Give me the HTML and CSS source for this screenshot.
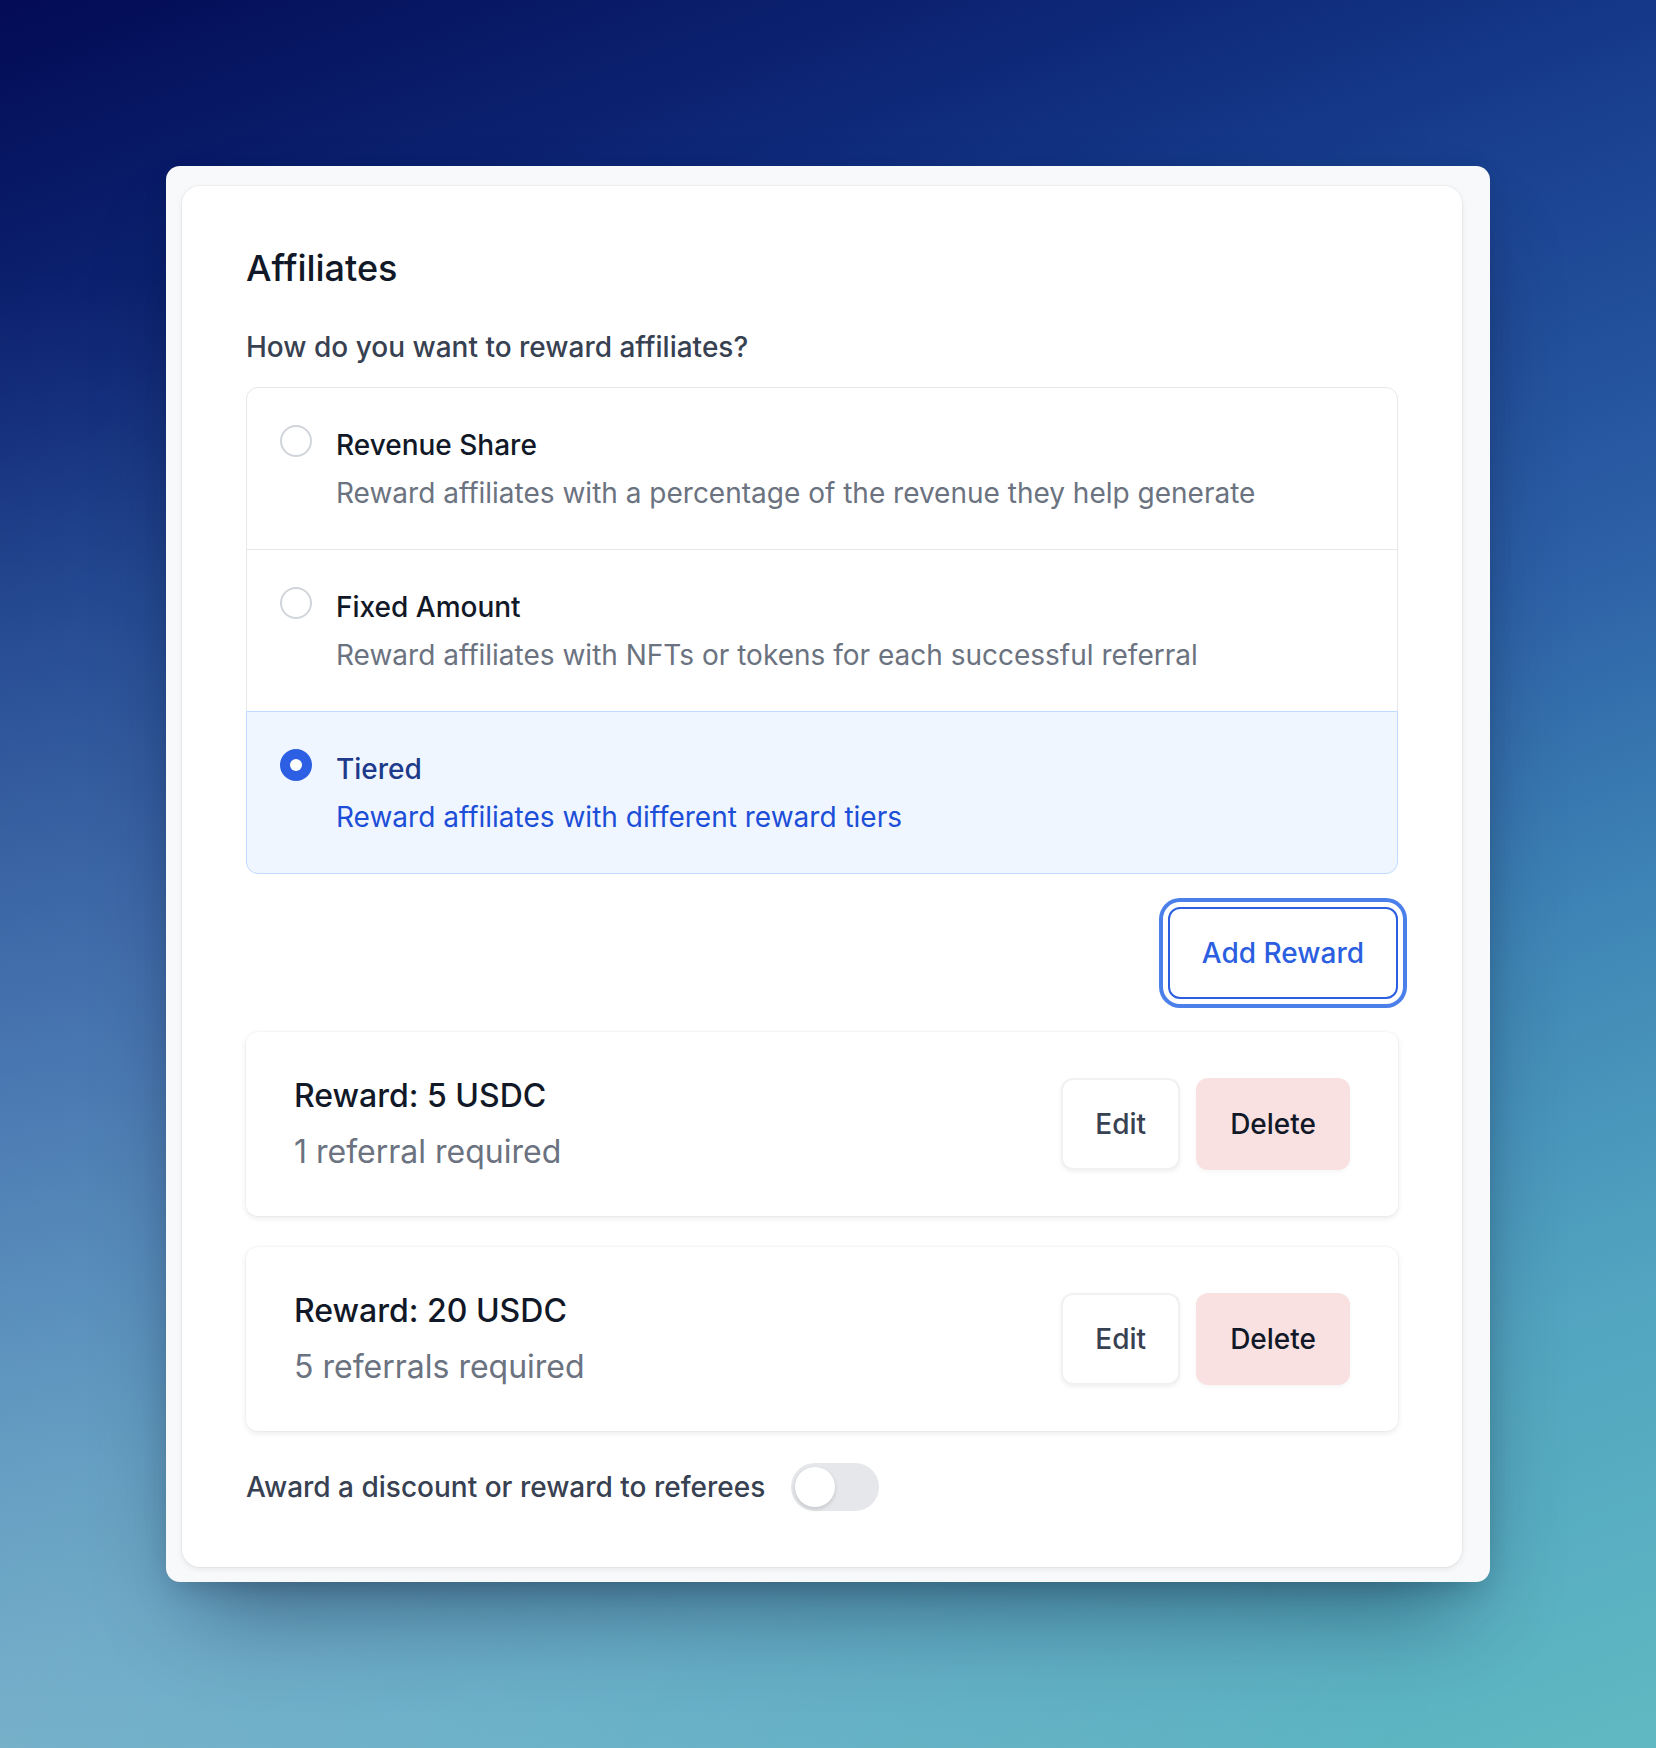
FILE: index.html
```html
<!DOCTYPE html>
<html lang="en">
<head>
<meta charset="utf-8">
<title>Affiliates</title>
<link rel="stylesheet" href="styles.css">
</head>
<body>
<div class="page">
  <div class="frame">
    <div class="panel">
      <h2 class="title">Affiliates</h2>
      <p class="question">How do you want to reward affiliates?</p>
      <div class="options">
        <div class="option">
          <span class="radio"></span>
          <div class="option-text">
            <div class="option-label">Revenue Share</div>
            <div class="option-desc">Reward affiliates with a percentage of the revenue they help generate</div>
          </div>
        </div>
        <div class="option">
          <span class="radio"></span>
          <div class="option-text">
            <div class="option-label">Fixed Amount</div>
            <div class="option-desc">Reward affiliates with NFTs or tokens for each successful referral</div>
          </div>
        </div>
        <div class="option option-selected">
          <span class="radio radio-checked"></span>
          <div class="option-text">
            <div class="option-label">Tiered</div>
            <div class="option-desc">Reward affiliates with different reward tiers</div>
          </div>
        </div>
      </div>
      <div class="actions">
        <button class="btn-add" type="button">Add Reward</button>
      </div>
      <div class="rewards">
        <div class="reward-card">
          <div class="reward-info">
            <div class="reward-title">Reward: 5 USDC</div>
            <div class="reward-sub">1 referral required</div>
          </div>
          <div class="reward-buttons">
            <button class="btn btn-edit" type="button">Edit</button>
            <button class="btn btn-delete" type="button">Delete</button>
          </div>
        </div>
        <div class="reward-card">
          <div class="reward-info">
            <div class="reward-title">Reward: 20 USDC</div>
            <div class="reward-sub">5 referrals required</div>
          </div>
          <div class="reward-buttons">
            <button class="btn btn-edit" type="button">Edit</button>
            <button class="btn btn-delete" type="button">Delete</button>
          </div>
        </div>
      </div>
      <div class="toggle-row">
        <span class="toggle-label">Award a discount or reward to referees</span>
        <span class="toggle"><span class="knob"></span></span>
      </div>
    </div>
  </div>
</div>
</body>
</html>
```

FILE: styles.css
```css
* { box-sizing: border-box; }

html, body {
  margin: 0;
  padding: 0;
}

body {
  font-family: "Inter", "Noto Sans", "Liberation Sans", sans-serif;
  width: 1656px;
  height: 1748px;
  overflow: hidden;
}

.page {
  width: 1656px;
  height: 1748px;
  display: flex;
  align-items: center;
  justify-content: center;
  background:
    radial-gradient(ellipse at 0% 100%, rgba(170, 205, 218, 0.45) 0%, rgba(170, 205, 218, 0) 60%),
    linear-gradient(160deg, #030b55 0%, #0e2878 18%, #173d8c 28%, #2c5fa6 48%, #3f86b6 64%, #52a4c0 80%, #60b9c2 100%);
}

.frame {
  width: 1324px;
  height: 1416px;
  background: #f8f9fb;
  border-radius: 14px;
  padding: 20px 28px 15px 16px;
  box-shadow: 0 50px 90px -30px rgba(0, 10, 40, 0.45), 0 10px 30px -10px rgba(0, 10, 40, 0.25);
}

.panel {
  background: #ffffff;
  border-radius: 18px;
  height: 100%;
  padding: 58px 64px 56px 64px;
  box-shadow: 0 2px 6px rgba(0, 0, 0, 0.08), 0 0 0 1px rgba(0, 0, 0, 0.03);
  display: flex;
  flex-direction: column;
}

.title {
  margin: 0;
  font-size: 36px;
  line-height: 48px;
  font-weight: 500;
  color: #111827;
}

.question {
  margin: 35px 0 0 0;
  font-size: 28px;
  line-height: 40px;
  font-weight: 500;
  color: #374151;
}

.options {
  margin-top: 20px;
  display: flex;
  flex-direction: column;
}

.option {
  display: flex;
  align-items: flex-start;
  gap: 24px;
  padding: 37px 32px 36px 33px;
  border: 1px solid #e5e7eb;
  background: #ffffff;
}

.option + .option {
  margin-top: -1px;
}

.option:first-child {
  border-radius: 12px 12px 0 0;
}

.option:last-child {
  border-radius: 0 0 12px 12px;
}

.option-selected {
  position: relative;
  z-index: 1;
  background: #eff6ff;
  border-color: #bfdbfe;
}

.radio {
  flex: none;
  width: 32px;
  height: 32px;
  border-radius: 50%;
  border: 2px solid #d1d5db;
  background: #ffffff;
  display: flex;
  align-items: center;
  justify-content: center;
}

.radio-checked {
  border-color: #2d5fe4;
  background: #2d5fe4;
}

.radio-checked::after {
  content: "";
  width: 12px;
  height: 12px;
  border-radius: 50%;
  background: #ffffff;
}

.option-text {
  display: flex;
  flex-direction: column;
}

.option-label {
  font-size: 28px;
  line-height: 40px;
  font-weight: 500;
  color: #111827;
}

.option-desc {
  margin-top: 8px;
  font-size: 28px;
  line-height: 40px;
  font-weight: 400;
  color: #6b7280;
}

.option-selected .option-label {
  color: #1e3a8a;
}

.option-selected .option-desc {
  color: #1d4ed8;
}

.actions {
  margin-top: 33px;
  display: flex;
  justify-content: flex-end;
}

.btn-add {
  font-family: inherit;
  font-size: 28px;
  line-height: 40px;
  font-weight: 500;
  color: #2c5fe0;
  background: #ffffff;
  border: 2px solid #2c5fe0;
  border-radius: 12px;
  padding: 24px 32px;
  height: 92px;
  box-shadow: 0 0 0 5px #ffffff, 0 0 0 9px #4b80ea;
  cursor: pointer;
}

.rewards {
  margin-top: 33px;
  display: flex;
  flex-direction: column;
  gap: 31px;
}

.reward-card {
  display: flex;
  align-items: center;
  justify-content: space-between;
  padding: 40px 48px;
  height: 184px;
  background: #ffffff;
  border-radius: 12px;
  box-shadow: 0 2px 6px rgba(0, 0, 0, 0.09), 0 0 0 1px rgba(0, 0, 0, 0.02);
}

.reward-info {
  display: flex;
  flex-direction: column;
}

.reward-title {
  font-size: 32px;
  line-height: 48px;
  font-weight: 500;
  color: #111827;
}

.reward-sub {
  margin-top: 8px;
  font-size: 32px;
  line-height: 48px;
  font-weight: 400;
  color: #6b7280;
}

.reward-buttons {
  display: flex;
  gap: 16px;
}

.btn {
  font-family: inherit;
  font-size: 28px;
  line-height: 40px;
  font-weight: 500;
  height: 92px;
  padding: 24px 32px;
  border-radius: 12px;
  border: 2px solid transparent;
  cursor: pointer;
}

.btn-edit {
  background: #ffffff;
  color: #374151;
  border-color: #f0f1f3;
  box-shadow: 0 2px 4px rgba(0, 0, 0, 0.06);
}

.btn-delete {
  background: #f9e1e1;
  color: #111827;
  box-shadow: 0 2px 4px rgba(0, 0, 0, 0.04);
}

.toggle-row {
  margin-top: 32px;
  display: flex;
  align-items: center;
  gap: 26px;
  height: 48px;
}

.toggle-label {
  font-size: 28px;
  line-height: 40px;
  font-weight: 500;
  color: #374151;
}

.toggle {
  width: 88px;
  height: 48px;
  border-radius: 24px;
  background: #e5e7eb;
  padding: 4px;
  display: flex;
  align-items: center;
}

.knob {
  width: 40px;
  height: 40px;
  border-radius: 50%;
  background: #ffffff;
  box-shadow: 0 2px 4px rgba(0, 0, 0, 0.15);
}
```
